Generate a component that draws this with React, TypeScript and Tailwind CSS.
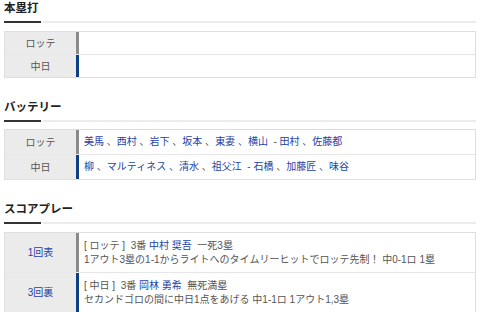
import React from "react";

type Seg = { t: string; link?: boolean };

const BLUE = "text-[#2543a6]";

function Heading({ title }: { title: string }) {
  return (
    <div>
      <h2 className="text-[11.5px] font-bold leading-[16px] text-[#222]">{title}</h2>
      <div className="mt-[5px] flex gap-[2px]">
        <div className="h-[2px] w-[37px] bg-[#333]" />
        <div className="h-[2px] flex-1 bg-[#ececec]" />
      </div>
    </div>
  );
}

function Segs({ segs }: { segs: Seg[] }) {
  return (
    <>
      {segs.map((s, i) => (
        <span key={i} className={s.link ? BLUE : "text-[#555]"}>
          {s.t}
        </span>
      ))}
    </>
  );
}

function Row({
  label,
  labelLink,
  bar,
  last,
  h,
  children,
}: {
  label: string;
  labelLink?: boolean;
  bar: string;
  last?: boolean;
  h: string;
  children?: React.ReactNode;
}) {
  return (
    <div className={`flex ${h} ${last ? "" : "border-b border-[#e6e6e6]"}`}>
      <div
        className={`flex w-[71px] items-center justify-center bg-[#ebebeb] text-[10px] ${
          labelLink ? BLUE : "text-[#555]"
        }`}
      >
        {label}
      </div>
      <div className={`w-[3px] ${bar}`} />
      <div className="flex flex-1 flex-col justify-center pl-[5px] text-[10px] leading-[14px]">{children}</div>
    </div>
  );
}

const GRAY_BAR = "bg-[#8a8a8a]";
const NAVY_BAR = "bg-[#0d3f82]";

export default function App() {
  const lotte: Seg[] = [
    { t: "美馬", link: true },
    { t: " 、" },
    { t: "西村", link: true },
    { t: " 、" },
    { t: "岩下", link: true },
    { t: " 、" },
    { t: "坂本", link: true },
    { t: " 、" },
    { t: "東妻", link: true },
    { t: " 、" },
    { t: "横山", link: true },
    { t: "  - " },
    { t: "田村", link: true },
    { t: " 、" },
    { t: "佐藤都", link: true },
  ];
  const chunichi: Seg[] = [
    { t: "柳", link: true },
    { t: " 、" },
    { t: "マルティネス", link: true },
    { t: " 、" },
    { t: "清水", link: true },
    { t: " 、" },
    { t: "祖父江", link: true },
    { t: "  - " },
    { t: "石橋", link: true },
    { t: " 、" },
    { t: "加藤匠", link: true },
    { t: " 、" },
    { t: "味谷", link: true },
  ];

  return (
    <div className="w-[480px] bg-white px-[4px] font-['Liberation_Sans','Noto_Sans_CJK_JP',sans-serif] whitespace-pre">
      <section>
        <Heading title="本塁打" />
        <div className="mt-[8px] border border-[#dedede]">
          <Row label="ロッテ" bar={GRAY_BAR} h="h-[23px]" />
          <Row label="中日" bar={NAVY_BAR} h="h-[22px]" last />
        </div>
      </section>

      <section className="mt-[21px]">
        <Heading title="バッテリー" />
        <div className="mt-[7px] border border-[#dedede]">
          <Row label="ロッテ" bar={GRAY_BAR} h="h-[25px]">
            <div>
              <Segs segs={lotte} />
            </div>
          </Row>
          <Row label="中日" bar={NAVY_BAR} h="h-[24px]" last>
            <div>
              <Segs segs={chunichi} />
            </div>
          </Row>
        </div>
      </section>

      <section className="mt-[21px]">
        <Heading title="スコアプレー" />
        <div className="mt-[8px] border border-[#dedede]">
          <Row label="1回表" labelLink bar={GRAY_BAR} h="h-[40px]">
            <div>
              <Segs
                segs={[
                  { t: "[ ロッテ ]  3番 " },
                  { t: "中村 奨吾", link: true },
                  { t: "  一死3塁" },
                ]}
              />
            </div>
            <div className="text-[#555]">1アウト3塁の1-1からライトへのタイムリーヒットでロッテ先制！ 中0-1ロ 1塁</div>
          </Row>
          <Row label="3回裏" labelLink bar={NAVY_BAR} h="h-[39px]" last>
            <div>
              <Segs
                segs={[
                  { t: "[ 中日 ]  3番 " },
                  { t: "岡林 勇希", link: true },
                  { t: "  無死満塁" },
                ]}
              />
            </div>
            <div className="text-[#555]">セカンドゴロの間に中日1点をあげる 中1-1ロ 1アウト1,3塁</div>
          </Row>
        </div>
      </section>
    </div>
  );
}
